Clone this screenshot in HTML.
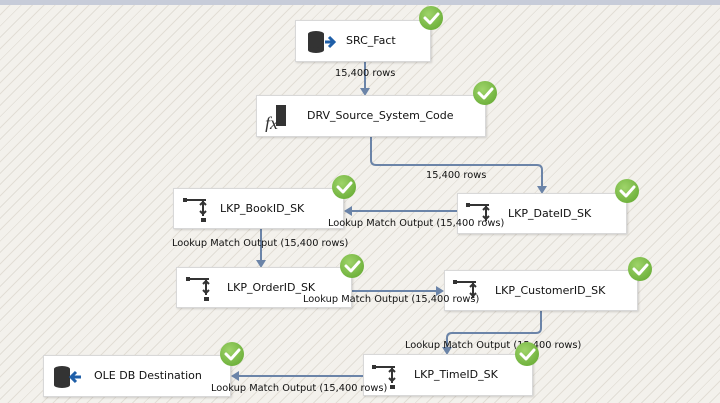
<!DOCTYPE html><html><head><style>
body{margin:0;width:720px;height:403px;overflow:hidden;position:relative;font-family:"DejaVu Sans","Liberation Sans",sans-serif;
background:#f3f1ec repeating-linear-gradient(-45deg,#f3f1ec 0 7px,#e2ded6 7px 8px);}
.top{position:absolute;left:0;top:0;width:720px;height:5px;background:#c7ccd9}
.n{position:absolute;background:#fff;border:1px solid #d8d8d8;box-shadow:1px 1px 2px rgba(0,0,0,.15);font-size:11px;color:#111;box-sizing:border-box}
.n span{position:absolute;top:13px}
.l{position:absolute;font-size:9.8px;color:#111;white-space:nowrap}
.ck{position:absolute;width:24px;height:24px;border-radius:50%;background:radial-gradient(circle at 40% 35%,#9fd46a,#5ea52c);}
svg{position:absolute;left:0;top:0}
</style></head><body>
<div class="top"></div>
<svg width="720" height="403" style="z-index:0">
<g stroke="#6b84a8" stroke-width="2" fill="none">
<path d="M365 62V90"/>
<path d="M371 137V160Q371 165 376 165H537Q542 165 542 170V188"/>
<path d="M457 211H350"/>
<path d="M261 229V262"/>
<path d="M351 291H438"/>
<path d="M541 311V328Q541 333 536 333H452Q447 333 447 338V349"/>
<path d="M363 376H237"/>
</g>
<g fill="#6b84a8">
<path d="M360 88h10l-5 8z"/><path d="M537 186h10l-5 8z"/><path d="M352 206v10l-8-5z"/>
<path d="M256 260h10l-5 8z"/><path d="M436 286v10l8-5z"/><path d="M442 347h10l-5 8z"/><path d="M239 371v10l-8-5z"/>
</g></svg>
<div class="l" style="left:335px;top:68px">15,400 rows</div>
<div class="l" style="left:426px;top:170px">15,400 rows</div>
<div class="l" style="left:172px;top:238px">Lookup Match Output (15,400 rows)</div>
<div class="l" style="left:405px;top:340px">Lookup Match Output (15,400 rows)</div>

<div class="n" style="left:295px;top:20px;width:136px;height:42px"><svg width="40" height="30" style="left:7px;top:7px"><ellipse cx="13" cy="6" rx="8" ry="3" fill="#333"/><rect x="5" y="6" width="16" height="16" fill="#333"/><ellipse cx="13" cy="22" rx="8" ry="3" fill="#333"/><path d="M22 14h8M26 9l5 5-5 5" stroke="#1f5fa8" stroke-width="3" fill="none"/></svg><span style="left:50px">SRC_Fact</span></div>
<div class="n" style="left:256px;top:95px;width:230px;height:42px"><svg width="30" height="30" style="left:5px;top:6px"><rect x="14" y="3" width="10" height="21" fill="#333"/><text x="3" y="27" font-family="Liberation Serif" font-style="italic" font-size="18" fill="#333">fx</text></svg><span style="left:50px">DRV_Source_System_Code</span></div>

<div class="n" style="left:173px;top:188px;width:171px;height:41px"><svg width="30" height="30" style="left:8px;top:5px"><path d="M3 6h21M21 6v16M18 11l3-3 3 3M18 17l3 3 3-3" stroke="#333" stroke-width="2" fill="none"/><rect x="1" y="4" width="4" height="4" fill="#333"/><rect x="19" y="24" width="5" height="4" fill="#333"/></svg><span style="left:46px">LKP_BookID_SK</span></div>
<div class="n" style="left:457px;top:193px;width:170px;height:41px"><svg width="30" height="30" style="left:7px;top:5px"><path d="M3 6h21M21 6v16M18 11l3-3 3 3M18 17l3 3 3-3" stroke="#333" stroke-width="2" fill="none"/><rect x="1" y="4" width="4" height="4" fill="#333"/></svg><span style="left:50px">LKP_DateID_SK</span></div>
<div class="l" style="left:328px;top:218px">Lookup Match Output (15,400 rows)</div>
<div class="n" style="left:176px;top:267px;width:176px;height:41px"><svg width="30" height="30" style="left:8px;top:5px"><path d="M3 6h21M21 6v16M18 11l3-3 3 3M18 17l3 3 3-3" stroke="#333" stroke-width="2" fill="none"/><rect x="1" y="4" width="4" height="4" fill="#333"/><rect x="19" y="24" width="5" height="4" fill="#333"/></svg><span style="left:50px">LKP_OrderID_SK</span></div>
<div class="n" style="left:444px;top:270px;width:194px;height:41px"><svg width="30" height="30" style="left:7px;top:5px"><path d="M3 6h21M21 6v16M18 11l3-3 3 3M18 17l3 3 3-3" stroke="#333" stroke-width="2" fill="none"/><rect x="1" y="4" width="4" height="4" fill="#333"/></svg><span style="left:50px">LKP_CustomerID_SK</span></div>
<div class="l" style="left:303px;top:294px">Lookup Match Output (15,400 rows)</div>
<div class="n" style="left:363px;top:354px;width:170px;height:42px"><svg width="30" height="30" style="left:7px;top:6px"><path d="M3 6h21M21 6v16M18 11l3-3 3 3M18 17l3 3 3-3" stroke="#333" stroke-width="2" fill="none"/><rect x="1" y="4" width="4" height="4" fill="#333"/><rect x="19" y="24" width="5" height="4" fill="#333"/></svg><span style="left:50px">LKP_TimeID_SK</span></div>
<div class="n" style="left:43px;top:355px;width:188px;height:42px"><svg width="40" height="30" style="left:5px;top:7px"><ellipse cx="13" cy="6" rx="8" ry="3" fill="#333"/><rect x="5" y="6" width="16" height="16" fill="#333"/><ellipse cx="13" cy="22" rx="8" ry="3" fill="#333"/><path d="M32 14h-9M27 9l-5 5 5 5" stroke="#1f5fa8" stroke-width="3" fill="none"/></svg><span style="left:50px">OLE DB Destination</span></div>
<div class="l" style="left:211px;top:383px">Lookup Match Output (15,400 rows)</div>

<div class="ck" style="left:419px;top:6px"></div>
<div class="ck" style="left:473px;top:81px"></div>
<div class="ck" style="left:332px;top:175px"></div>
<div class="ck" style="left:615px;top:179px"></div>
<div class="ck" style="left:340px;top:254px"></div>
<div class="ck" style="left:628px;top:257px"></div>
<div class="ck" style="left:515px;top:342px"></div>
<div class="ck" style="left:220px;top:342px"></div>
<svg width="720" height="403" style="z-index:5">
<g stroke="#fff" stroke-width="3" fill="none" stroke-linecap="round" stroke-linejoin="round">
<path d="M425 18l5 5 8-9"/><path d="M479 93l5 5 8-9"/><path d="M338 187l5 5 8-9"/><path d="M621 191l5 5 8-9"/>
<path d="M346 266l5 5 8-9"/><path d="M634 269l5 5 8-9"/><path d="M521 354l5 5 8-9"/><path d="M226 354l5 5 8-9"/>
</g></svg>
</body></html>
